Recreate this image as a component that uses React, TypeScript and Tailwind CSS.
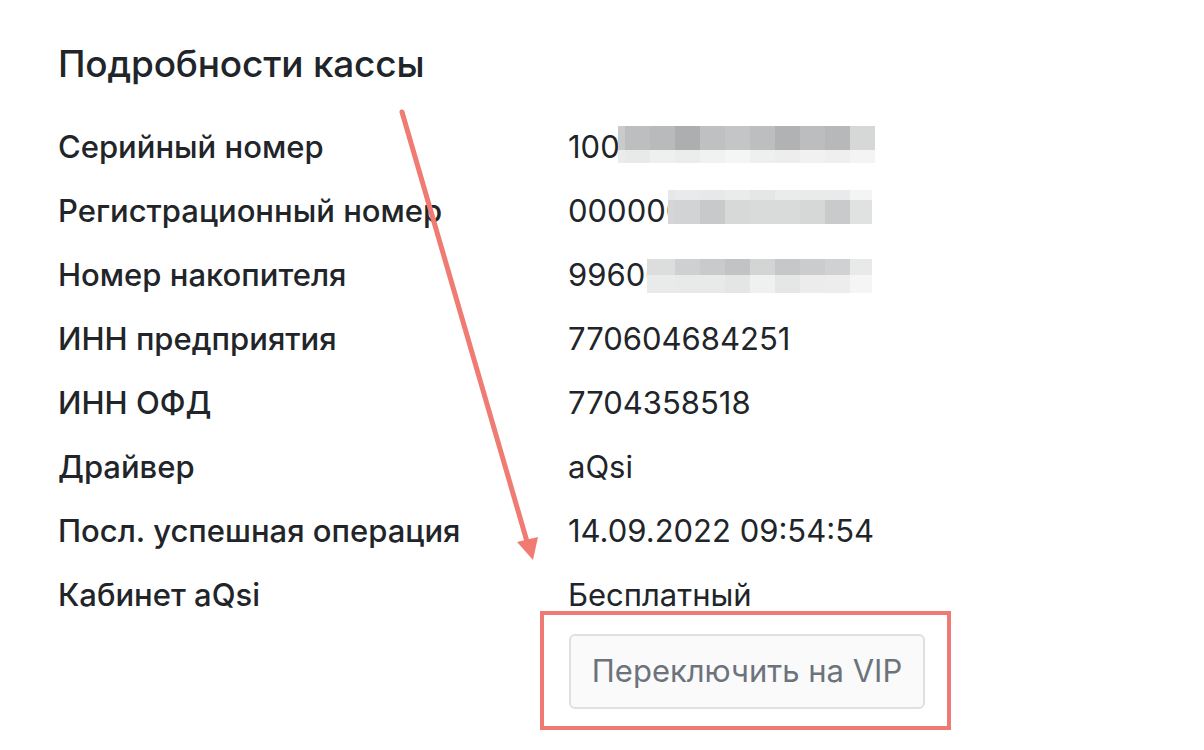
const rows: { label: string; value: string; mask?: { left: number; cols: number[]; top: string[]; bottom: string[]; split: number; y: number; h: number } }[] = [
  {
    label: 'Серийный номер',
    value: '1000',
    mask: {
      left: 50,
      cols: [7, 25, 25, 25, 25, 25, 25, 25, 25, 25, 25],
      top: ['#c9cacc', '#bdbec0', '#b9babc', '#adaeb0', '#bfc0c2', '#c4c5c7', '#bdbec0', '#b1b2b4', '#bcbdbf', '#b7b8ba', '#d6d7d7'],
      bottom: ['#eaebeb', '#e8e9e9', '#eeefef', '#ececec', '#f0f1f1', '#f5f5f5', '#eeefef', '#ededed', '#f1f1f1', '#efefef', '#f4f4f4'],
      split: 24,
      y: -21,
      h: 37,
    },
  },
  {
    label: 'Регистрационный номер',
    value: '000000',
    mask: {
      left: 100,
      cols: [7, 25, 25, 25, 25, 25, 25, 25, 22],
      top: ['#e6e7e7', '#e9eaea', '#e7e8e8', '#eaebeb', '#e5e6e6', '#ebebeb', '#e9eaea', '#e9eaea', '#f4f4f4'],
      bottom: ['#d4d5d6', '#d2d3d4', '#c8c9cb', '#d7d8d8', '#d9dada', '#d9dada', '#d6d7d7', '#c9cacc', '#e0e1e1'],
      split: 10,
      y: -21,
      h: 34,
    },
  },
  {
    label: 'Номер накопителя',
    value: '99600',
    mask: {
      left: 79,
      cols: [28, 25, 25, 25, 25, 25, 25, 25, 22],
      top: ['#dcdddd', '#cfd0d1', '#c9cacc', '#c2c3c5', '#d3d4d4', '#c6c7c9', '#cbcccd', '#d0d1d2', '#e8e9e9'],
      bottom: ['#e9eaea', '#e8e9e9', '#e8e9e9', '#e4e5e5', '#eff0f0', '#e5e6e6', '#ececec', '#ededed', '#f5f5f5'],
      split: 16,
      y: -16,
      h: 34,
    },
  },
  { label: 'ИНН предприятия', value: '770604684251' },
  { label: 'ИНН ОФД', value: '7704358518' },
  { label: 'Драйвер', value: 'aQsi' },
  { label: 'Посл. успешная операция', value: '14.09.2022 09:54:54' },
  { label: 'Кабинет aQsi', value: 'Бесплатный' },
]

export default function App() {
  return (
    <div
      className="relative w-[1204px] h-[750px] overflow-hidden bg-white text-[#212529]"
      style={{ fontFamily: 'Inter, "Noto Sans", sans-serif' }}
    >
      <div className="pl-[58px] pt-[42px]">
        <h1 className="text-[37px] leading-[44px] font-medium mb-[29px] tracking-[-0.2px]">Подробности кассы</h1>

        <div className="flex flex-col">
          {rows.map(r => (
            <div key={r.label} className="flex h-[64px] items-center">
              <div className="w-[510px] text-[31px] font-medium">{r.label}</div>
              <div className="relative text-[31px]">
                {r.value}
                {r.mask && (
                  <div
                    className="absolute top-1/2 flex flex-col"
                    style={{ left: r.mask.left, marginTop: r.mask.y, height: r.mask.h }}
                  >
                    <div className="flex" style={{ height: r.mask.split }}>
                      {r.mask.cols.map((w, i) => (
                        <div key={i} style={{ width: w, background: r.mask!.top[i] }} />
                      ))}
                    </div>
                    <div className="flex flex-1">
                      {r.mask.cols.map((w, i) => (
                        <div key={i} style={{ width: w, background: r.mask!.bottom[i] }} />
                      ))}
                    </div>
                  </div>
                )}
              </div>
            </div>
          ))}
        </div>

        <div className="ml-[482px] mt-[-16px] w-[411px] h-[119px] border-4 border-[#ee7a74] pl-[25px] pt-[19px]">
          <button className="w-[356px] h-[75px] rounded-md border-2 border-[#dee0e2] bg-[#fafafb] text-[31px] text-[#6c737b]">
            Переключить на VIP
          </button>
        </div>
      </div>

      {/* annotation arrow */}
      <svg className="absolute inset-0 pointer-events-none" width="1204" height="750">
        <line x1="402" y1="112" x2="528" y2="545" stroke="#ef7b73" strokeWidth="5" strokeLinecap="round" />
        <polygon points="517,542 538,537 533,560" fill="#ef7b73" />
      </svg>
    </div>
  )
}
